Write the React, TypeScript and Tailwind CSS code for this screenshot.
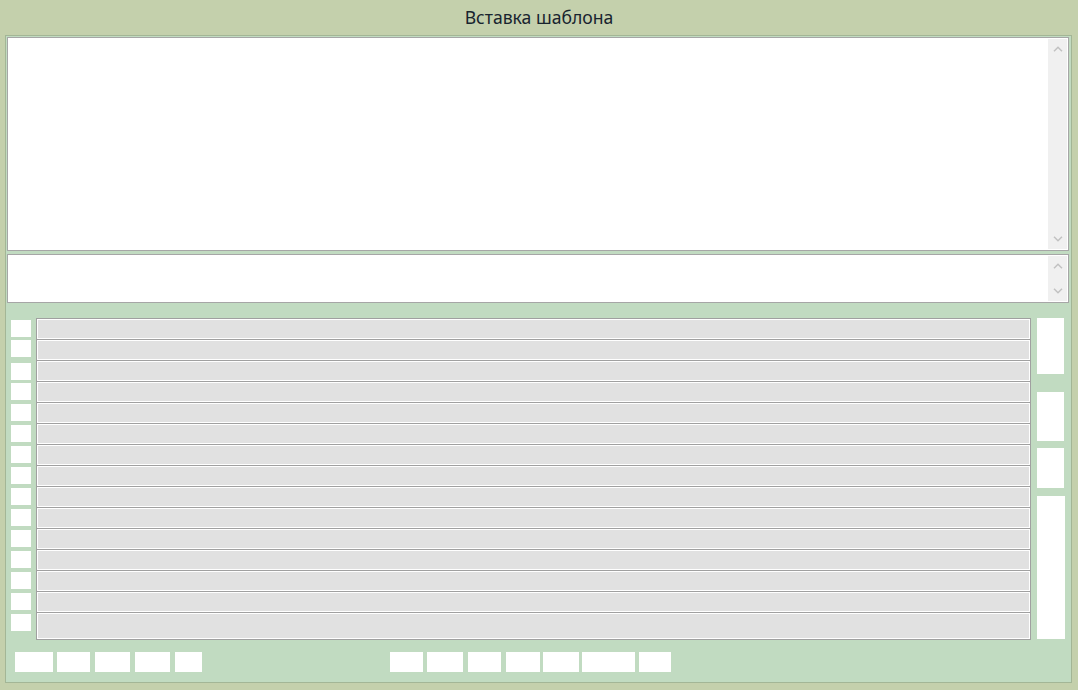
import React from "react";

const Chevron = ({ up }: { up?: boolean }) => (
  <svg width="10" height="6" viewBox="0 0 10 6" className="block">
    <polyline
      points={up ? "1,5.2 5,1.2 9,5.2" : "1,0.8 5,4.8 9,0.8"}
      fill="none"
      stroke="#c2c2c2"
      strokeWidth="1.5"
    />
  </svg>
);

const cbMargins = [
  "mt-[2px]",
  "mt-[3px]",
  "mt-[6px]",
  "mt-[3px]",
  "mt-[4px]",
  "mt-[4px]",
  "mt-[4px]",
  "mt-[4px]",
  "mt-[4px]",
  "mt-[4px]",
  "mt-[4px]",
  "mt-[4px]",
  "mt-[4px]",
  "mt-[4px]",
  "mt-[4px]",
];

const btns1 = [
  "w-[38px]",
  "ml-[4px] w-[33px]",
  "ml-[5px] w-[35px]",
  "ml-[5px] w-[35px]",
  "ml-[5px] w-[27px]",
];
const btns2 = [
  "ml-[188px] w-[33px]",
  "ml-[4px] w-[36px]",
  "ml-[5px] w-[33px]",
  "ml-[5px] w-[34px]",
  "ml-[3px] w-[36px]",
  "ml-[3px] w-[53px]",
  "ml-[4px] w-[32px]",
];

export default function App() {
  return (
    <div
      className="w-[1078px] h-[690px] bg-[#c4d0ac] flex flex-col overflow-hidden"
      style={{ fontFamily: '"Noto Sans", "Open Sans", sans-serif' }}
    >
      <div className="h-[35px] flex items-center justify-center text-[17.6px] text-[#18242f] leading-none pt-[1px]">
        Вставка шаблона
      </div>
      <div className="ml-[5px] w-[1067px] h-[648px] border border-[#a3b696] bg-[#c1dbc1] flex flex-col">
        {/* textarea 1 */}
        <div className="ml-px mt-px w-[1062px] h-[214px] border border-[#a6a6a6] bg-white flex justify-end p-px">
          <div className="w-[19px] h-full bg-[#f0f0f0] flex flex-col items-center justify-between pt-[7px] pb-[7px]">
            <Chevron up />
            <Chevron />
          </div>
        </div>
        {/* textarea 2 */}
        <div className="ml-px mt-[3px] w-[1062px] h-[49px] border border-[#a6a6a6] bg-white flex justify-end p-px">
          <div className="w-[19px] h-full bg-[#f0f0f0] flex flex-col items-center justify-between pt-[7px] pb-[7px]">
            <Chevron up />
            <Chevron />
          </div>
        </div>
        {/* main */}
        <div className="mt-[15px] h-[322px] flex">
          <div className="ml-[5px] w-[20px] flex flex-col">
            {cbMargins.map((m, i) => (
              <div key={i} className={`${m} h-[17px] w-[20px] bg-white`} />
            ))}
          </div>
          <div className="ml-[5px] w-[995px] flex flex-col">
            {Array.from({ length: 15 }).map((_, i) => (
              <div
                key={i}
                className={`${i === 0 ? "" : "-mt-px"} ${
                  i === 14 ? "h-[28px]" : "h-[22px]"
                } w-full border border-[#a0a0a0] bg-[#e1e1e1] shadow-[inset_1px_1px_0_#ffffff,inset_-1px_-1px_0_#ffffff]`}
              />
            ))}
          </div>
          <div className="ml-[6px] flex flex-col">
            <div className="w-[27px] h-[56px] bg-white" />
            <div className="mt-[18px] w-[27px] h-[49px] bg-white" />
            <div className="mt-[7px] w-[27px] h-[40px] bg-white" />
            <div className="mt-[8px] w-[28px] h-[143px] bg-white" />
          </div>
        </div>
        {/* bottom buttons */}
        <div className="mt-[12px] h-[20px] flex pl-[9px]">
          {btns1.map((c, i) => (
            <div key={"a" + i} className={`${c} h-[20px] bg-white`} />
          ))}
          {btns2.map((c, i) => (
            <div key={"b" + i} className={`${c} h-[20px] bg-white`} />
          ))}
        </div>
      </div>
    </div>
  );
}
